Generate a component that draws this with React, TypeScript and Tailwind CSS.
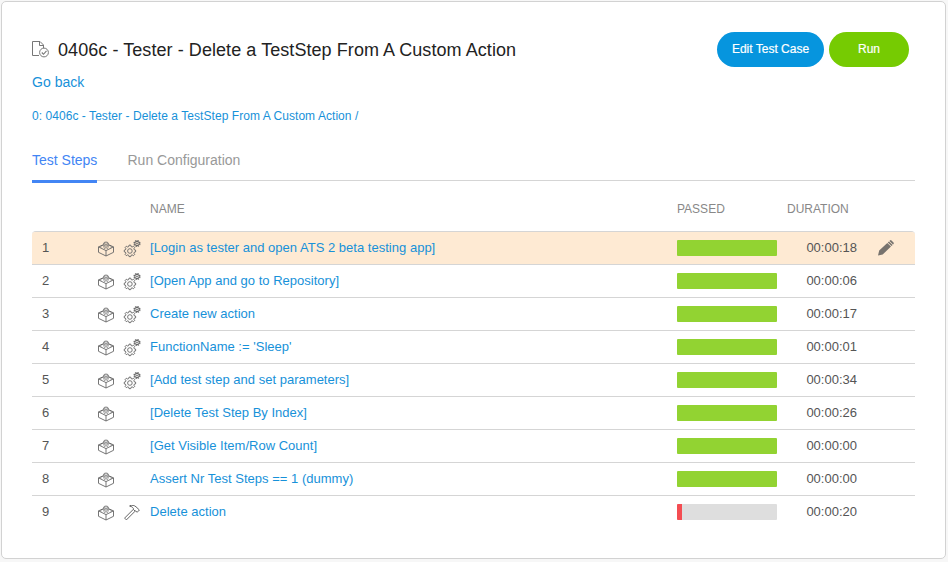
import React from 'react';

type Kind = 'gears' | 'hammer' | null;

const steps: { name: string; duration: string; kind: Kind; passed: boolean }[] = [
  { name: '[Login as tester and open ATS 2 beta testing app]', duration: '00:00:18', kind: 'gears', passed: true },
  { name: '[Open App and go to Repository]', duration: '00:00:06', kind: 'gears', passed: true },
  { name: 'Create new action', duration: '00:00:17', kind: 'gears', passed: true },
  { name: "FunctionName := 'Sleep'", duration: '00:00:01', kind: 'gears', passed: true },
  { name: '[Add test step and set parameters]', duration: '00:00:34', kind: 'gears', passed: true },
  { name: '[Delete Test Step By Index]', duration: '00:00:26', kind: null, passed: true },
  { name: '[Get Visible Item/Row Count]', duration: '00:00:00', kind: null, passed: true },
  { name: 'Assert Nr Test Steps == 1 (dummy)', duration: '00:00:00', kind: null, passed: true },
  { name: 'Delete action', duration: '00:00:20', kind: 'hammer', passed: false },
];

function FileCheckIcon() {
  return (
    <svg className="h-[18px] w-[18px]" viewBox="0 0 18 18" fill="none" stroke="#777" strokeWidth="1">
      <path d="M7 14.500H.5V.5h7.500L11.500 4v3M7.500.5v4h4" />
      <circle cx="12" cy="11.500" r="4.400" />
      <path d="M9.800 11.500l1.700 1.800 3-3.500" strokeWidth="1.100" />
    </svg>
  );
}

function BrickIcon() {
  return (
    <svg className="h-4 w-4" viewBox="0 0 16 16" fill="none" stroke="#666" strokeWidth="0.9" strokeLinejoin="round">
      <path d="M5.500 3.600L.5 5.900v5.400L8 15l7.500-3.700V5.900l-5-2.300M.5 5.900L8 9.600l7.500-3.700M8 9.600V15" />
      <path d="M5.800 2.300v1.600c0 .7 1 1.100 2.200 1.100s2.200-.4 2.200-1.100V2.300" />
      <ellipse cx="8" cy="2.200" rx="2.200" ry="1.100" />
      <path d="M2.800 6.600V5.500c0-.6.700-1 1.600-1s1.600.4 1.600 1v1.100M10 6.600V5.500c0-.6.700-1 1.600-1s1.600.4 1.600 1v1.100M6.400 7.800c0-.6.700-1 1.600-1s1.600.4 1.600 1" />
    </svg>
  );
}

function GearsIcon() {
  return (
    <svg className="h-4 w-4 overflow-visible" viewBox="0 0 16 16" fill="none" stroke="#666" strokeWidth="0.9">
      <path
        transform="translate(5.900 10) scale(1.080) translate(-5.700 -10.500)"
        d="M4.900 5.100h1.600l.3 1.300 1 .4 1.200-.7 1.100 1.100-.7 1.200.4 1 1.200.3v1.600l-1.200.3-.4 1 .7 1.100-1.100 1.100-1.200-.7-1 .4-.3 1.200H4.900l-.3-1.200-1-.4-1.200.7-1.100-1.100.7-1.100-.4-1-1.100-.3V9.700l1.100-.3.4-1-.7-1.200 1.100-1.100 1.200.7 1-.4z"
      />
      <circle cx="5.900" cy="10" r="2.300" />
      <circle cx="13" cy="2.500" r="2.900" strokeWidth="1.300" strokeDasharray="1.400 .88" />
      <circle cx="13" cy="2.500" r="2.200" strokeWidth="1" />
      <circle cx="13" cy="2.500" r=".7" />
    </svg>
  );
}

function HammerIcon() {
  return (
    <svg className="h-4 w-4" viewBox="0 0 16 16" fill="none" stroke="#666" strokeWidth="1" strokeLinejoin="round">
      <path d="M9.300 4.400L.6 13.100l1.800 1.800 8.800-8.800M5.800.7c2.300-.8 4.600-.4 6.200 1.100l3.400 3.200-2.300 2.300-1.500-1.500-.6.200-1.800-1.700.2-.8C8.500 2.100 7.600 1.400 5.800 1.300z" />
    </svg>
  );
}

function PencilIcon() {
  return (
    <svg className="h-4 w-4" viewBox="0 0 16 16" fill="#77736e">
      <path d="M0 15.600l1.200-5.100L9.300 2.900l3.700 3.700-8.300 7.800zM9.800 2.400l1.100-1 3.700 3.700-1.100 1zM11.400.9l.6-.5q.8-.6 1.500 0l2 2q.7.800 0 1.500l-.5.700z" />
    </svg>
  );
}

const row = 'grid h-[33px] grid-cols-[66px_52px_527px_100px_80px_58px] items-center border-b border-[#d5d5d5]';

export default function App() {
  return (
    <div className="h-[562px] w-[948px] bg-[#f7f7f7] pt-px pl-px font-['Liberation_Sans',Arial,sans-serif]">
      <main className="h-[558px] w-[945px] rounded-[5px] border border-[#d2d2d2] bg-white pl-[30px]">
        <header className="flex h-[68px] w-[877px] items-start justify-between pt-[30px]">
          <div className="flex items-center pt-1.5">
            <FileCheckIcon />
            <h1 className="ml-2 text-[18px] leading-6 tracking-[0.065px] whitespace-nowrap text-[#222]">
              0406c - Tester - Delete a TestStep From A Custom Action
            </h1>
          </div>
          <div className="flex gap-[5px] text-[12px] text-white [-webkit-text-stroke:0.2px_white]">
            <button className="h-[35px] w-[107px] rounded-full bg-[#0695de] pb-px">Edit Test Case</button>
            <button className="h-[35px] w-20 rounded-full bg-[#76cb02] pb-px">Run</button>
          </div>
        </header>
        <a className="block h-6 w-fit text-[14px] leading-6 tracking-[0.03px] text-[#1791d9]">Go back</a>
        <nav className="mt-3 h-5 text-[12px] leading-5 tracking-[0.055px] text-[#1791d9]">
          0: 0406c - Tester - Delete a TestStep From A Custom Action /
        </nav>
        <div className="mt-6 flex h-[33px] w-[883px] text-[14px] leading-5">
          <div className="h-[33px] w-[65px] border-b-[3px] border-[#4285f4] whitespace-nowrap text-[#4285f4]">Test Steps</div>
          <div className="h-[31px] flex-1 border-b border-[#d5d5d5] pl-[30.500px] text-[#999]">Run Configuration</div>
        </div>
        <section className="w-[883px] text-[13px]">
          <div className="grid h-12 grid-cols-[118px_527px_110px_128px] items-center pt-[3px] text-[12px] text-[#888]">
            <span />
            <span>NAME</span>
            <span>PASSED</span>
            <span>DURATION</span>
          </div>
          <div className="rounded-t-[4px] border-t border-[#d5d5d5]">
            {steps.map((s, i) => (
              <div
                key={s.name}
                className={`${row} ${i === 0 ? 'rounded-t-[3px] bg-[#feead3]' : ''} last:border-transparent`}
              >
                <span className="pl-2.5 text-[#555]">{i + 1}</span>
                <span className="flex gap-2.5 pt-px">
                  <BrickIcon />
                  {s.kind === 'gears' && <GearsIcon />}
                  {s.kind === 'hammer' && <HammerIcon />}
                </span>
                <a className="tracking-[0.015px] text-[#1791d9]">{s.name}</a>
                <div className={`h-4 overflow-hidden rounded-[1px] ${s.passed ? 'bg-[#92d332]' : 'bg-[#dedede]'}`}>
                  {!s.passed && <div className="h-full w-[5px] bg-[#f44d52]" />}
                </div>
                <span className="text-right text-[#555]">{s.duration}</span>
                {i === 0 && <span className="pl-[21px]"><PencilIcon /></span>}
              </div>
            ))}
          </div>
        </section>
      </main>
    </div>
  );
}
